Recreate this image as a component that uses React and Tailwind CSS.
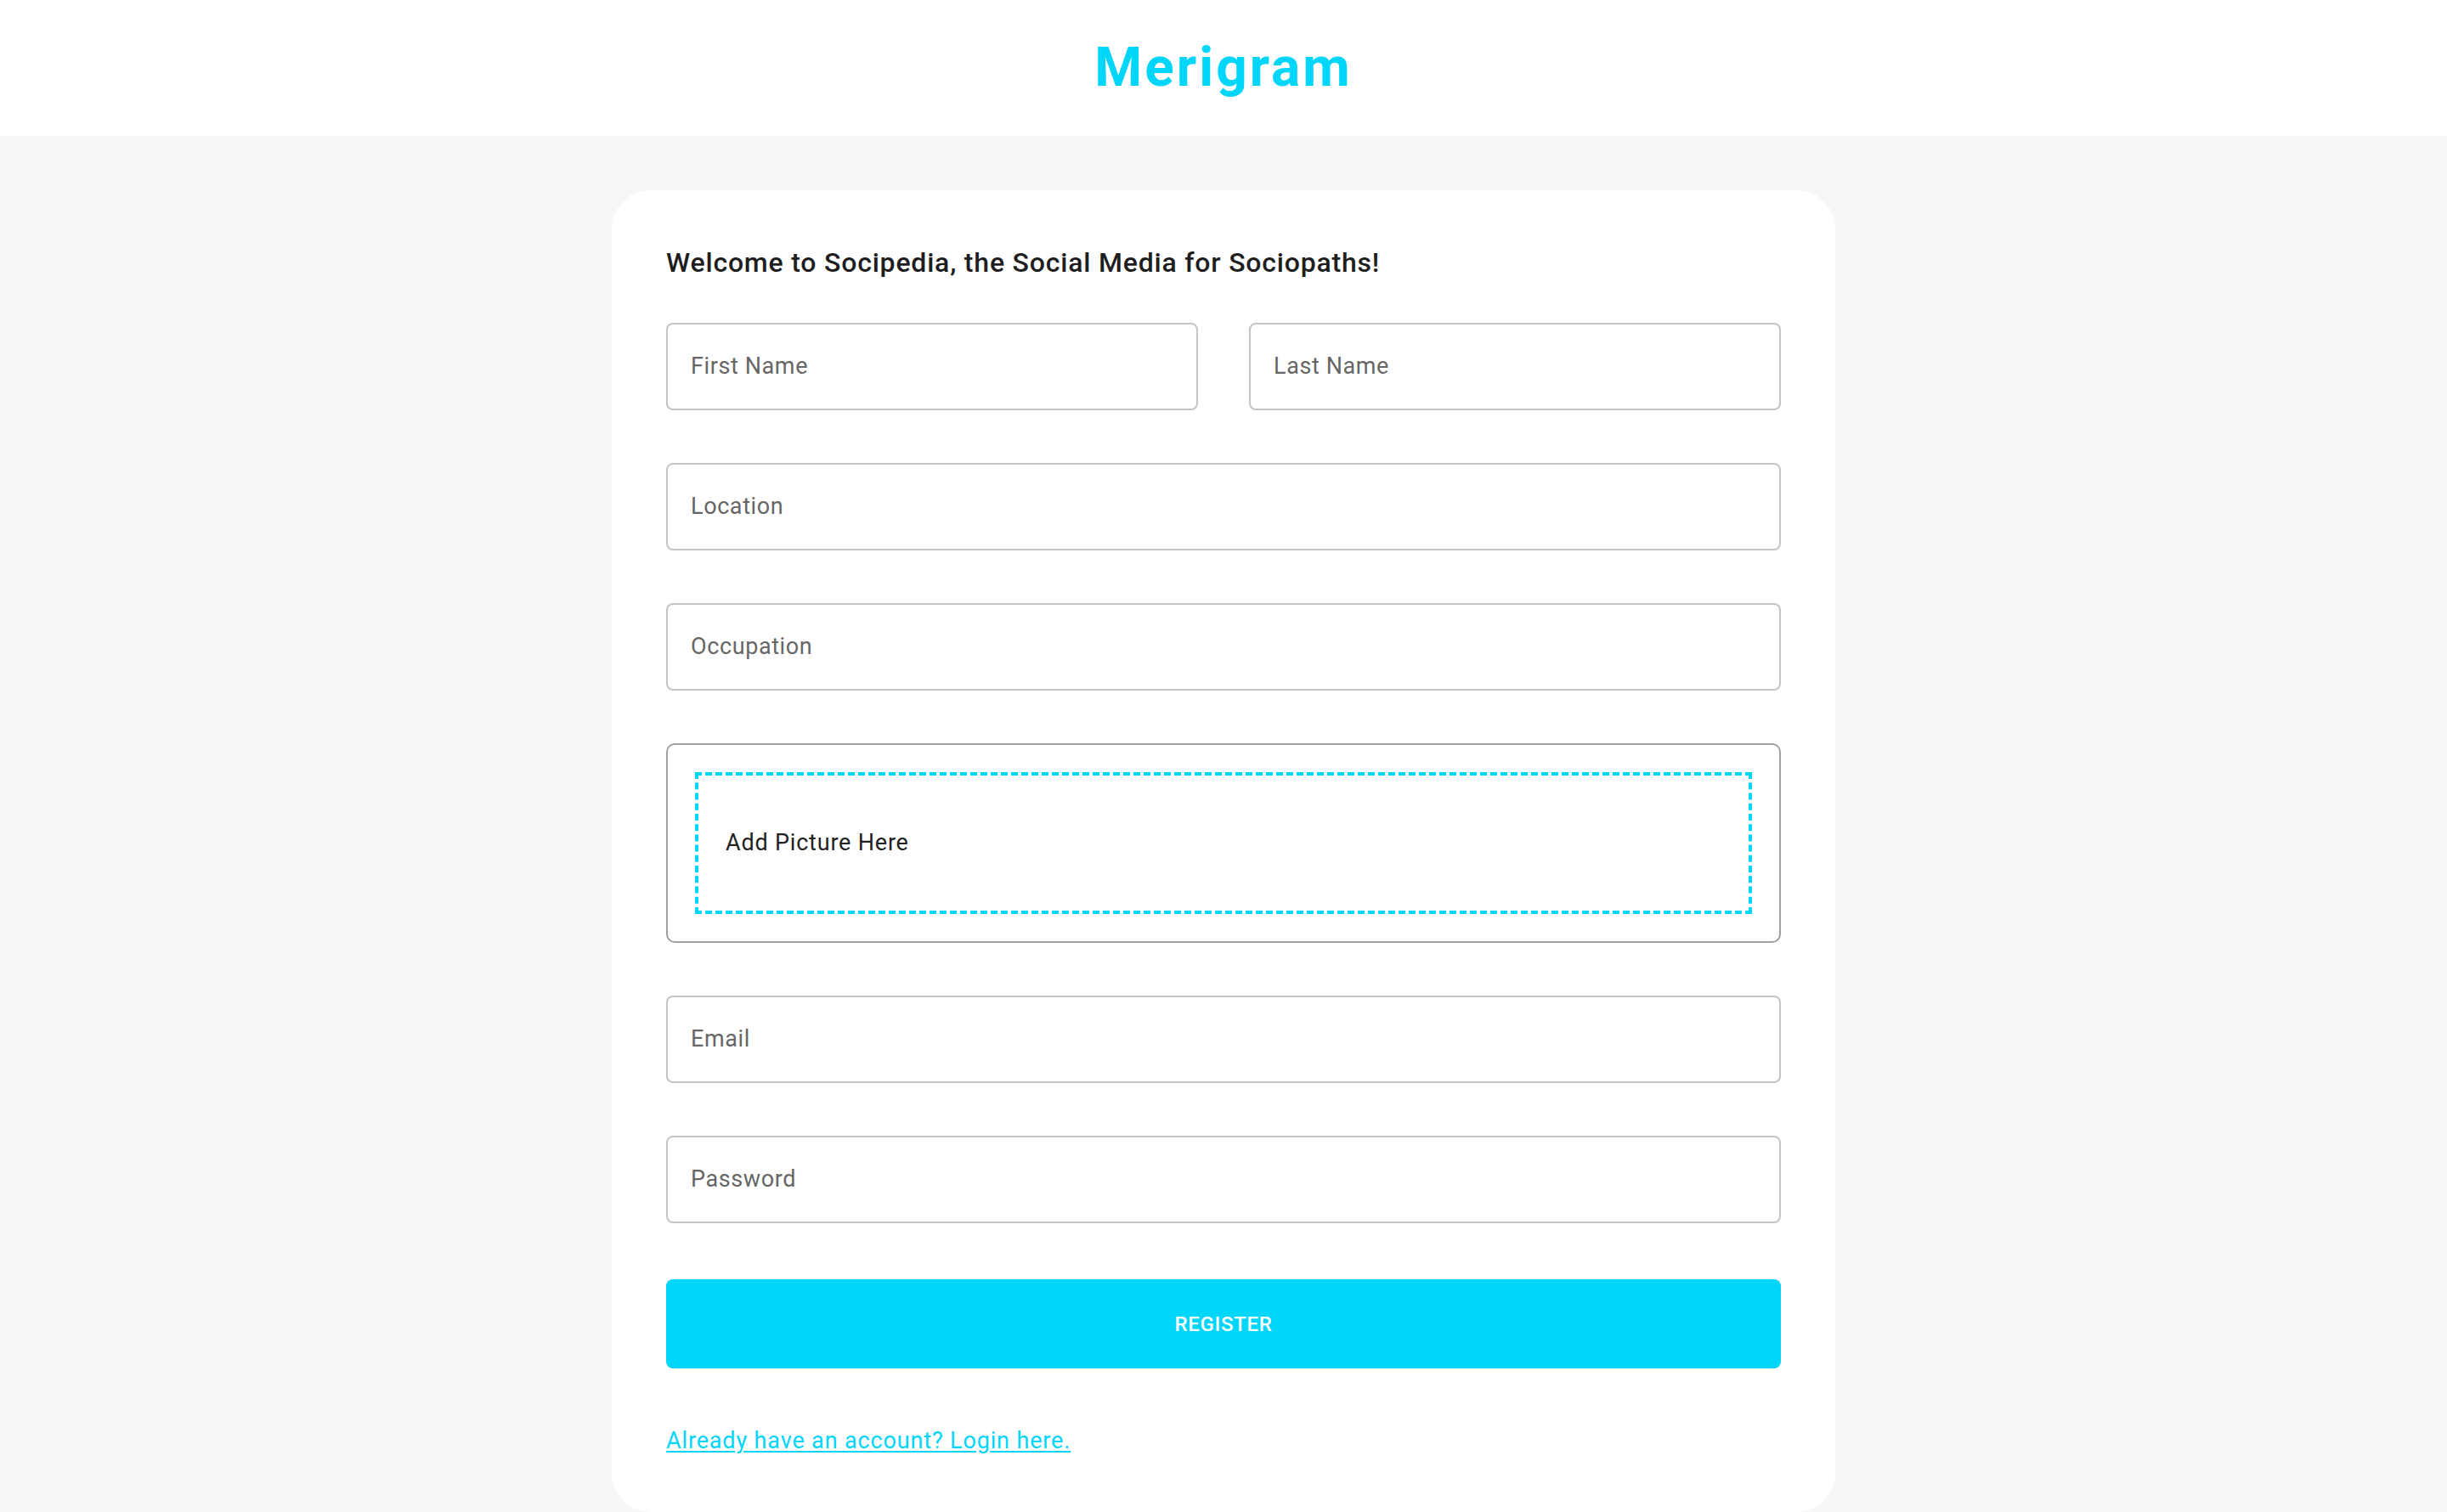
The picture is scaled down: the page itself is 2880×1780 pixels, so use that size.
import React from "react"

const fieldBox =
  "flex h-[103px] items-center rounded-[8px] border-2 border-[#c4c4c4] bg-white px-[27px] text-[27px] tracking-[0.6px] text-[#666666]"

const Field = ({ label, wide }) => {
  return (
    <div className={wide ? `${fieldBox} col-span-2` : fieldBox}>
      <span>{label}</span>
    </div>
  )
}

const PictureDrop = () => {
  return (
    <div className="col-span-2 h-[235px] rounded-[10px] border-2 border-[#a0a0a0] p-[32px]">
      <div className="flex h-full items-center border-4 border-dashed border-[#00d5fa] px-[32px] text-[27px] tracking-[0.8px] text-[#222222]">
        <p>Add Picture Here</p>
      </div>
    </div>
  )
}

const App = () => {
  return (
    <div className="h-[1780px] overflow-hidden bg-[#f6f6f6] font-['Roboto',sans-serif]">
      <header className="flex h-[160px] items-center justify-center bg-white">
        <h1 className="text-[64px] font-bold leading-none tracking-[3px] text-[#00d5fa]">
          Merigram
        </h1>
      </header>

      <div className="pt-[64px]">
        <div className="mx-auto h-[1556px] w-[1440px] rounded-[46px] bg-white px-[64px] pt-[64px]">
          <h5 className="mb-[49px] text-[32px] font-medium leading-[43px] tracking-[0.8px] text-[#1e1e1e]">
            Welcome to Socipedia, the Social Media for Sociopaths!
          </h5>

          <form className="grid grid-cols-2 gap-x-[60px] gap-y-[62px]">
            <Field label="First Name" />
            <Field label="Last Name" />
            <Field label="Location" wide />
            <Field label="Occupation" wide />
            <PictureDrop />
            <Field label="Email" wide />
            <Field label="Password" wide />
          </form>

          <button
            type="button"
            className="mt-[66px] flex h-[105px] w-full items-center justify-center rounded-[8px] bg-[#00d5fa] text-[24px] font-medium tracking-[0.7px] text-white"
          >
            REGISTER
          </button>

          <p className="mt-[67px] text-[27px] leading-[36px] tracking-[0.85px]">
            <a href="#" className="text-[#00d5fa] underline underline-offset-[3px]">
              Already have an account? Login here.
            </a>
          </p>
        </div>
      </div>
    </div>
  )
}

export default App
